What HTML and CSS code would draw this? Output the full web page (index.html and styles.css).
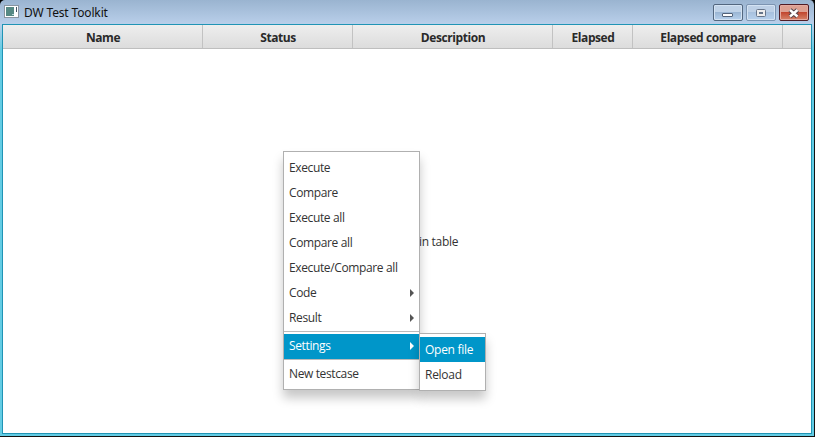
FILE: index.html
```html
<!DOCTYPE html>
<html lang="en">
<head>
<meta charset="utf-8">
<title>DW Test Toolkit</title>
<link rel="stylesheet" href="styles.css">
</head>
<body>
<div class="window">
  <header class="titlebar">
    <svg class="app-icon" width="15" height="13" viewBox="0 0 15 13"><rect x=".5" y=".5" width="14" height="12" fill="#fff" stroke="#8994a0"/><rect x="2" y="2" width="8" height="9" fill="#568984"/><path d="M8 9.500h2" stroke="#b9d5d8"/><path d="M12.500 2v5" stroke="#456" fill="none"/></svg>
    <h1>DW Test Toolkit</h1>
    <div class="controls">
      <button class="control" aria-label="Minimize"><svg width="12" height="12" viewBox="0 0 12 12"><rect x=".5" y="6.500" width="10" height="3" rx=".5" fill="#fff" stroke="#53637a"/></svg></button>
      <button class="control maximize" aria-label="Maximize"><svg width="12" height="12" viewBox="0 0 12 12"><rect x="1.500" y="2.500" width="9" height="7" rx="1" fill="#eee" stroke="#66758a"/><rect x="4.500" y="5.500" width="3" height="1" fill="#aac5df" stroke="#66758a"/></svg></button>
      <button class="control close" aria-label="Close"><svg width="12" height="12" viewBox="0 0 12 12"><path d="M2 3l7.500 6.500M9.500 3L2 9.500" stroke="#54434a" stroke-width="4.400"/><path d="M2 3l7.500 6.500M9.500 3L2 9.500" stroke="#fff" stroke-width="2.400"/></svg></button>
    </div>
  </header>
  <main class="content">
    <div class="columns">
      <div>Name</div><div>Status</div><div>Description</div><div>Elapsed</div><div>Elapsed compare</div><div></div>
    </div>
    <div class="empty">in table</div>
  </main>
</div>
<nav class="menu main-menu">
  <div class="item">Execute</div>
  <div class="item">Compare</div>
  <div class="item">Execute all</div>
  <div class="item">Compare all</div>
  <div class="item">Execute/Compare all</div>
  <div class="item parent">Code</div>
  <div class="item parent">Result</div>
  <div class="separator"></div>
  <div class="item parent selected">Settings</div>
  <div class="separator"></div>
  <div class="item">New testcase</div>
</nav>
<nav class="menu sub-menu">
  <div class="item selected">Open file</div>
  <div class="item">Reload</div>
</nav>
</body>
</html>
```
FILE: styles.css
```css
* { box-sizing: border-box; }
body { margin: 0; background: #000; font: 12px/16px "Open Sans", "Noto Sans", sans-serif; color: #333; overflow: hidden; }
.window { width: 815px; height: 437px; padding: 1px 2px 2px 2px; display: flex; flex-direction: column; background: linear-gradient(#9ab4d0, #b9cfea 24px, #63cce4 50px); border-right: 1px solid #111; border-bottom: 1px solid #111; border-radius: 5px 5px 0 0; }
.titlebar { height: 23px; display: flex; align-items: flex-start; }
.app-icon { margin: 4px 0 0 2px; }
h1 { margin: 4px 0 0 5px; font: 12px/16px "Noto Sans", sans-serif; letter-spacing: -.15px; color: #111; }
.controls { display: flex; gap: 3px; margin: 3px 3px 0 auto; }
.control { display: flex; align-items: center; justify-content: center; width: 30px; height: 17px; padding: 0; border: 1px solid #53677f; border-radius: 2px; background: linear-gradient(#c0d3e8 45%, #9bb6d4 50%, #b7d1ed); box-shadow: inset 0 0 0 1px #d4e3f3; }
.maximize { border-color: #7c94b1; background: linear-gradient(#bdd0e6 45%, #a8c1de 50%, #b7d1ed); }
.close { border-color: #501c25; background: linear-gradient(#dda092 45%, #c24730 50%, #d6846a); box-shadow: inset 0 0 0 1px #e5aaa0; }
.content { flex: 1; display: flex; flex-direction: column; border: 1px solid #2094b5; background: #fff; }
.columns { height: 24px; display: grid; grid-template-columns: 200px 150px 200px 80px 150px 1fr; font-weight: 700; color: #292929; border-bottom: 1px solid #bebebe; background: linear-gradient(#eee, #dcdcdc); }
.columns div { padding: 5px 0 0 1px; text-align: center; border-right: 1px solid #c2c2c2; letter-spacing: -.43px; }
.columns div:last-child { border: 0; }
.empty { margin: 185px 0 0 416px; letter-spacing: -.3px; }
.menu { position: absolute; background: #fff; border: 1px solid #b0b0b0; box-shadow: 0 8px 10px rgba(0,0,0,.22); }
.main-menu { left: 283px; top: 151px; width: 137px; height: 239px; padding-top: 4px; }
.sub-menu { left: 419px; top: 333px; width: 67px; height: 58px; padding-top: 3px; }
.item { height: 25px; padding: 4px 5px; display: flex; align-items: center; white-space: nowrap; letter-spacing: -.27px; }
.main-menu .item { padding: 3px 5px 5px; letter-spacing: -.37px; }
.selected { background: #0096c9; color: #fff; }
.parent::after { content: ""; margin-left: auto; border: 4px solid transparent; border-left-color: #555; border-right: 0; }
.selected.parent::after { border-left-color: #fff; }
.separator { height: 3px; border-top: 1px solid #bbb; }
```
